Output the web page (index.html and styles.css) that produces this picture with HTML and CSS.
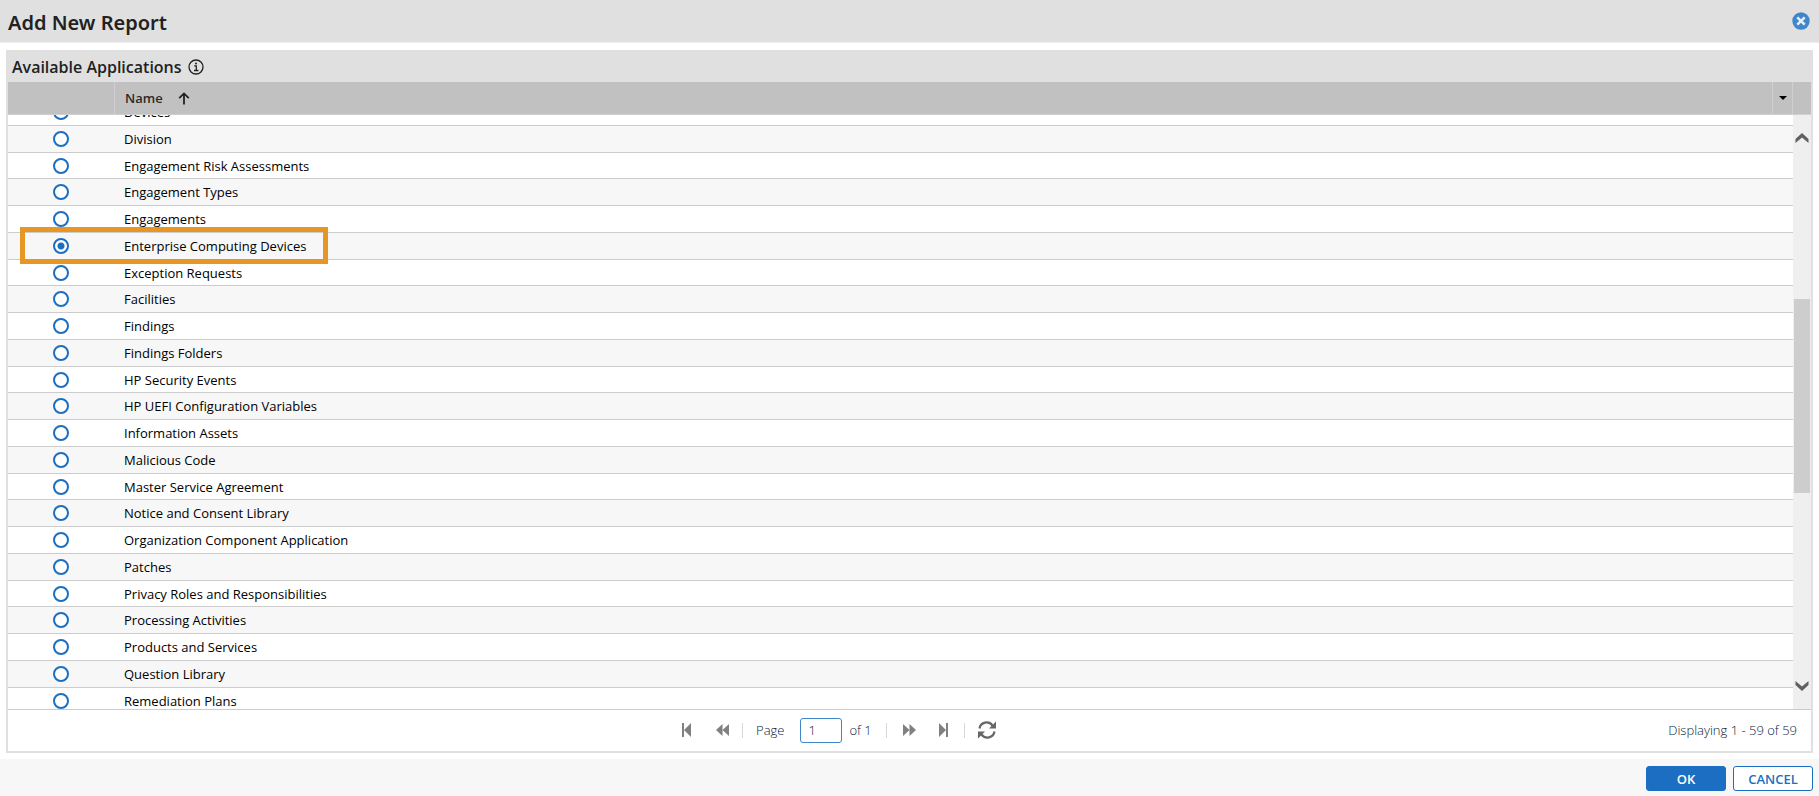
FILE: index.html
```
<!DOCTYPE html>
<html lang="en">
<head>
<meta charset="utf-8">
<title>Add New Report</title>
<link rel="stylesheet" href="styles.css">
</head>
<body>
<header class="titlebar">
  <h1 class="title">Add New Report</h1>
  <button class="icon-btn close" type="button" aria-label="Close">
    <svg width="18" height="18" viewBox="0 0 18 18"><circle cx="9" cy="9" r="8.7" fill="#3f86cc"/><path d="M5.3 5.3l7.4 7.4M12.7 5.3l-7.4 7.4" stroke="#e6eef5" stroke-width="2.6"/></svg>
  </button>
</header>
<main class="panel">
  <div class="panel-head">
    <h2 class="panel-title">Available Applications</h2>
    <svg width="16" height="16" viewBox="0 0 16 16" fill="none" stroke="#222"><circle cx="8" cy="8" r="7" stroke-width="1.3"/><path d="M6.2 6.8H8.3V11.5M6 11.5H10.4" stroke-width="1.3"/><circle cx="8" cy="4.4" r="1" fill="#222" stroke="none"/></svg>
  </div>
  <div class="cols">
    <div class="col-select"></div>
    <div class="col-name">Name
      <svg width="12" height="13" viewBox="0 0 12 13" fill="none" stroke="#222" stroke-width="1.8"><path d="M6 12.5V1.5M1.2 6.2L6 1.4L10.8 6.2"/></svg>
    </div>
    <button class="icon-btn col-menu" type="button" aria-label="Column options"><svg width="8" height="4" viewBox="0 0 8 4"><path d="M0 0H8L4 4Z" fill="#000"/></svg></button>
    <div class="col-gap"></div>
  </div>
  <div class="grid">
    <div class="rows">
      <table class="apps">
        <tbody>
          <tr><td class="pick"><input type="radio" name="app" id="a1"></td><td><label for="a1">Devices</label></td></tr>
          <tr><td class="pick"><input type="radio" name="app" id="a2"></td><td><label for="a2">Division</label></td></tr>
          <tr><td class="pick"><input type="radio" name="app" id="a3"></td><td><label for="a3">Engagement Risk Assessments</label></td></tr>
          <tr><td class="pick"><input type="radio" name="app" id="a4"></td><td><label for="a4">Engagement Types</label></td></tr>
          <tr><td class="pick"><input type="radio" name="app" id="a5"></td><td><label for="a5">Engagements</label></td></tr>
          <tr><td class="pick"><input type="radio" name="app" id="a6" checked></td><td><label for="a6">Enterprise Computing Devices</label></td></tr>
          <tr><td class="pick"><input type="radio" name="app" id="a7"></td><td><label for="a7">Exception Requests</label></td></tr>
          <tr><td class="pick"><input type="radio" name="app" id="a8"></td><td><label for="a8">Facilities</label></td></tr>
          <tr><td class="pick"><input type="radio" name="app" id="a9"></td><td><label for="a9">Findings</label></td></tr>
          <tr><td class="pick"><input type="radio" name="app" id="a10"></td><td><label for="a10">Findings Folders</label></td></tr>
          <tr><td class="pick"><input type="radio" name="app" id="a11"></td><td><label for="a11">HP Security Events</label></td></tr>
          <tr><td class="pick"><input type="radio" name="app" id="a12"></td><td><label for="a12">HP UEFI Configuration Variables</label></td></tr>
          <tr><td class="pick"><input type="radio" name="app" id="a13"></td><td><label for="a13">Information Assets</label></td></tr>
          <tr><td class="pick"><input type="radio" name="app" id="a14"></td><td><label for="a14">Malicious Code</label></td></tr>
          <tr><td class="pick"><input type="radio" name="app" id="a15"></td><td><label for="a15">Master Service Agreement</label></td></tr>
          <tr><td class="pick"><input type="radio" name="app" id="a16"></td><td><label for="a16">Notice and Consent Library</label></td></tr>
          <tr><td class="pick"><input type="radio" name="app" id="a17"></td><td><label for="a17">Organization Component Application</label></td></tr>
          <tr><td class="pick"><input type="radio" name="app" id="a18"></td><td><label for="a18">Patches</label></td></tr>
          <tr><td class="pick"><input type="radio" name="app" id="a19"></td><td><label for="a19">Privacy Roles and Responsibilities</label></td></tr>
          <tr><td class="pick"><input type="radio" name="app" id="a20"></td><td><label for="a20">Processing Activities</label></td></tr>
          <tr><td class="pick"><input type="radio" name="app" id="a21"></td><td><label for="a21">Products and Services</label></td></tr>
          <tr><td class="pick"><input type="radio" name="app" id="a22"></td><td><label for="a22">Question Library</label></td></tr>
          <tr><td class="pick"><input type="radio" name="app" id="a23"></td><td><label for="a23">Remediation Plans</label></td></tr>
        </tbody>
      </table>
      <div class="highlight"></div>
    </div>
    <div class="scroll">
      <svg width="14" height="10" viewBox="0 0 14 10"><path d="M0.5 10V6L7 0L13.5 6V10L7 4.5Z" fill="#606060"/></svg>
      <div class="track"><div class="thumb"></div></div>
      <svg width="14" height="10" viewBox="0 0 14 10"><path d="M0.5 0V4L7 10L13.5 4V0L7 5.5Z" fill="#606060"/></svg>
    </div>
  </div>
  <div class="pager">
    <div class="pager-nav">
      <button class="icon-btn" type="button" aria-label="First page"><svg width="9" height="14" viewBox="0 0 9 14" fill="#808080"><path d="M0 0H2V14H0ZM9 0V14L2 7Z"/></svg></button>
      <button class="icon-btn prev" type="button" aria-label="Previous page"><svg width="13" height="12" viewBox="0 0 13 12" fill="#808080"><path d="M6.5 0V12L0 6ZM13 0V12L6.5 6Z"/></svg></button>
      <span class="sep"></span>
      <label class="page-label" for="page">Page</label>
      <input class="page-box" id="page" type="text" value="1">
      <span class="page-of">of 1</span>
      <span class="sep sep-next"></span>
      <button class="icon-btn" type="button" aria-label="Next page"><svg width="13" height="12" viewBox="0 0 13 12" fill="#808080"><path d="M0 0V12L6.5 6ZM6.5 0V12L13 6Z"/></svg></button>
      <button class="icon-btn last" type="button" aria-label="Last page"><svg width="9" height="14" viewBox="0 0 9 14" fill="#808080"><path d="M7 0H9V14H7ZM0 0V14L7 7Z"/></svg></button>
      <span class="sep sep-last"></span>
      <button class="icon-btn" type="button" aria-label="Refresh"><svg width="18" height="18" viewBox="0 0 18 18"><path d="M1.5 7.5C2.5 1 11 -0.5 14.5 4.5M16.5 10.5C15.5 17 7 18.5 3.5 13.5" fill="none" stroke="#666" stroke-width="2.2"/><path d="M18 0.5V7.5H11ZM0 17.5V10.5H7Z" fill="#666"/></svg></button>
    </div>
    <span class="count">Displaying 1 - 59 of 59</span>
  </div>
</main>
<footer class="actions">
  <button class="btn primary" type="button">OK</button>
  <button class="btn" type="button">CANCEL</button>
</footer>
</body>
</html>
```
FILE: styles.css
```
* { box-sizing: border-box; }
body {
  margin: 0;
  height: 100vh;
  display: flex;
  flex-direction: column;
  background: #fff;
  color: #000;
  font: 13px/18px "Open Sans", sans-serif;
}
svg { display: block; flex: none; }
button, input { font: inherit; }
.icon-btn { border: 0; padding: 0; background: none; }

.titlebar {
  display: flex;
  justify-content: space-between;
  align-items: center;
  height: 43px;
  flex: none;
  padding: 0 9px 0 8px;
  background: #e0e0e0;
  border-bottom: 1px solid #efefef;
}
.title { margin: 4px 0 0; font: 600 20px/26px "Noto Sans", sans-serif; color: #222; }

.panel {
  flex: 1;
  min-height: 0;
  display: flex;
  flex-direction: column;
  margin: 7px 6px 6px;
  border: 2px solid #e0e0e0;
}
.panel-head {
  display: flex;
  align-items: center;
  gap: 6px;
  height: 30px;
  flex: none;
  padding-left: 4px;
  background: #e0e0e0;
}
.panel-title { margin: 0; font: 600 16px/20px "Open Sans", sans-serif; color: #222; }

.cols {
  display: flex;
  height: 33px;
  flex: none;
  background: #c1c1c1;
  border-bottom: 1px solid #d0d0d0;
}
.col-select { width: 107px; border-right: 1px solid #d0d0d0; }
.col-name {
  flex: 1;
  display: flex;
  align-items: center;
  gap: 15px;
  padding-left: 10px;
  font-weight: 600;
  color: #2a2a2a;
}
.col-menu {
  display: flex;
  align-items: center;
  justify-content: center;
  width: 21px;
  border: solid #d0d0d0;
  border-width: 0 1px;
}
.col-gap { width: 18px; }

.grid {
  flex: 1;
  min-height: 0;
  display: flex;
  border-bottom: 1px solid #ccc;
}
.rows { position: relative; flex: 1; overflow: hidden; }
.apps { width: 100%; margin-top: -16px; border-collapse: separate; border-spacing: 0; }
.apps tr { height: 27px; }
.apps tr:nth-child(4n+3) { height: 26px; }
.apps tr:nth-child(even) { background: #f7f7f7; }
.apps td { padding: 4px 0 0; border-bottom: 1px solid #ccc; vertical-align: top; }
.apps .pick { width: 116px; padding: 5px 0 0 45px; }
.apps label { display: block; }
.apps input {
  appearance: none;
  display: block;
  width: 16px;
  height: 16px;
  margin: 0;
  border: 2px solid #1b6ec2;
  border-radius: 50%;
  background: #fff;
}
.apps input:checked { background: radial-gradient(circle, #1b6ec2 3px, #fff 4px); }
.highlight {
  position: absolute;
  left: 12px;
  top: 112px;
  width: 308px;
  height: 37px;
  border: 5px solid #e89623;
  pointer-events: none;
}

.scroll {
  display: flex;
  flex-direction: column;
  align-items: center;
  width: 18px;
  padding: 18px 0;
  background: #efefef;
}
.track { flex: 1; width: 16px; padding-top: 156px; }
.thumb { height: 194px; background: #cdcdcd; }

.pager {
  display: grid;
  grid-template-columns: 1fr auto;
  align-items: center;
  height: 41px;
  flex: none;
  padding: 0 14px 1px 0;
  color: #0a2238;
}
.pager-nav { display: flex; align-items: center; padding-left: 40.6%; }
.prev { margin: 0 13px 0 25px; }
.sep { width: 1px; height: 15px; background: #d8d8d8; }
.page-label { margin: 0 16px 0 13px; }
.page-box {
  width: 42px;
  height: 25px;
  padding: 0 7px;
  border: 1px solid #3f86c8;
  border-radius: 3px;
  color: #222;
}
.page-label, .page-box, .page-of, .count { font-weight: 300; }
.page-of { margin-left: 7px; }
.sep-next { margin: 0 16px 0 14px; }
.last { margin: 0 16px 0 23px; }
.sep-last { margin-right: 13px; }

.actions {
  display: flex;
  justify-content: flex-end;
  gap: 7px;
  height: 37px;
  flex: none;
  padding: 7px 6px 5px;
  background: #f7f7f7;
}
.btn {
  width: 80px;
  height: 25px;
  padding: 0;
  border: 1px solid #1b6ec2;
  border-radius: 3px;
  background: #fff;
  color: #1b6ec2;
  font-weight: 600;
}
.primary { background: #1b6ec2; color: #fff; }
```
